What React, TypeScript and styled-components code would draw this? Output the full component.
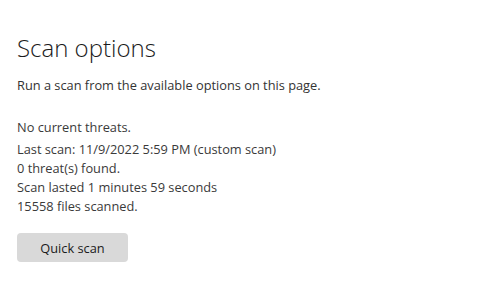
import * as React from "react";
import styled, { createGlobalStyle } from "styled-components";

const GlobalStyle = createGlobalStyle`
  html, body {
    margin: 0;
    padding: 0;
    background: #ffffff;
  }
  body {
    font-family: "Open Sans", "Noto Sans", "Liberation Sans", sans-serif;
  }
`;

const Page = styled.div`
  display: flex;
  flex-direction: column;
  align-items: flex-start;
  padding: 33px 0 0 17px;
  width: 500px;
  height: 286px;
  box-sizing: border-box;
`;

const Title = styled.h1`
  margin: 0;
  font-size: 24px;
  font-weight: 300;
  color: #1b1b1b;
  line-height: 30px;
`;

const Subtitle = styled.p`
  margin: 13px 0 0;
  font-size: 12.8px;
  color: #333333;
  line-height: 19px;
`;

const Status = styled.div`
  display: flex;
  flex-direction: column;
  margin-top: 23px;
`;

const StatusLine = styled.div<{ $gap?: number }>`
  font-size: 12.8px;
  color: #3a3a3a;
  line-height: 19px;
  margin-bottom: ${(p) => p.$gap ?? 0}px;
`;

const ScanButton = styled.button`
  margin-top: 17px;
  width: 111px;
  height: 29px;
  border: none;
  border-radius: 4px;
  background: #d9d9d9;
  color: #1b1b1b;
  font-family: inherit;
  font-size: 12.8px;
  cursor: pointer;
`;

export default function App() {
  return (
    <>
      <GlobalStyle />
      <Page>
        <Title>Scan options</Title>
        <Subtitle>Run a scan from the available options on this page.</Subtitle>
        <Status>
          <StatusLine $gap={3}>No current threats.</StatusLine>
          <StatusLine>Last scan: 11/9/2022 5:59 PM (custom scan)</StatusLine>
          <StatusLine>0 threat(s) found.</StatusLine>
          <StatusLine>Scan lasted 1 minutes 59 seconds</StatusLine>
          <StatusLine>15558 files scanned.</StatusLine>
        </Status>
        <ScanButton>Quick scan</ScanButton>
      </Page>
    </>
  );
}
